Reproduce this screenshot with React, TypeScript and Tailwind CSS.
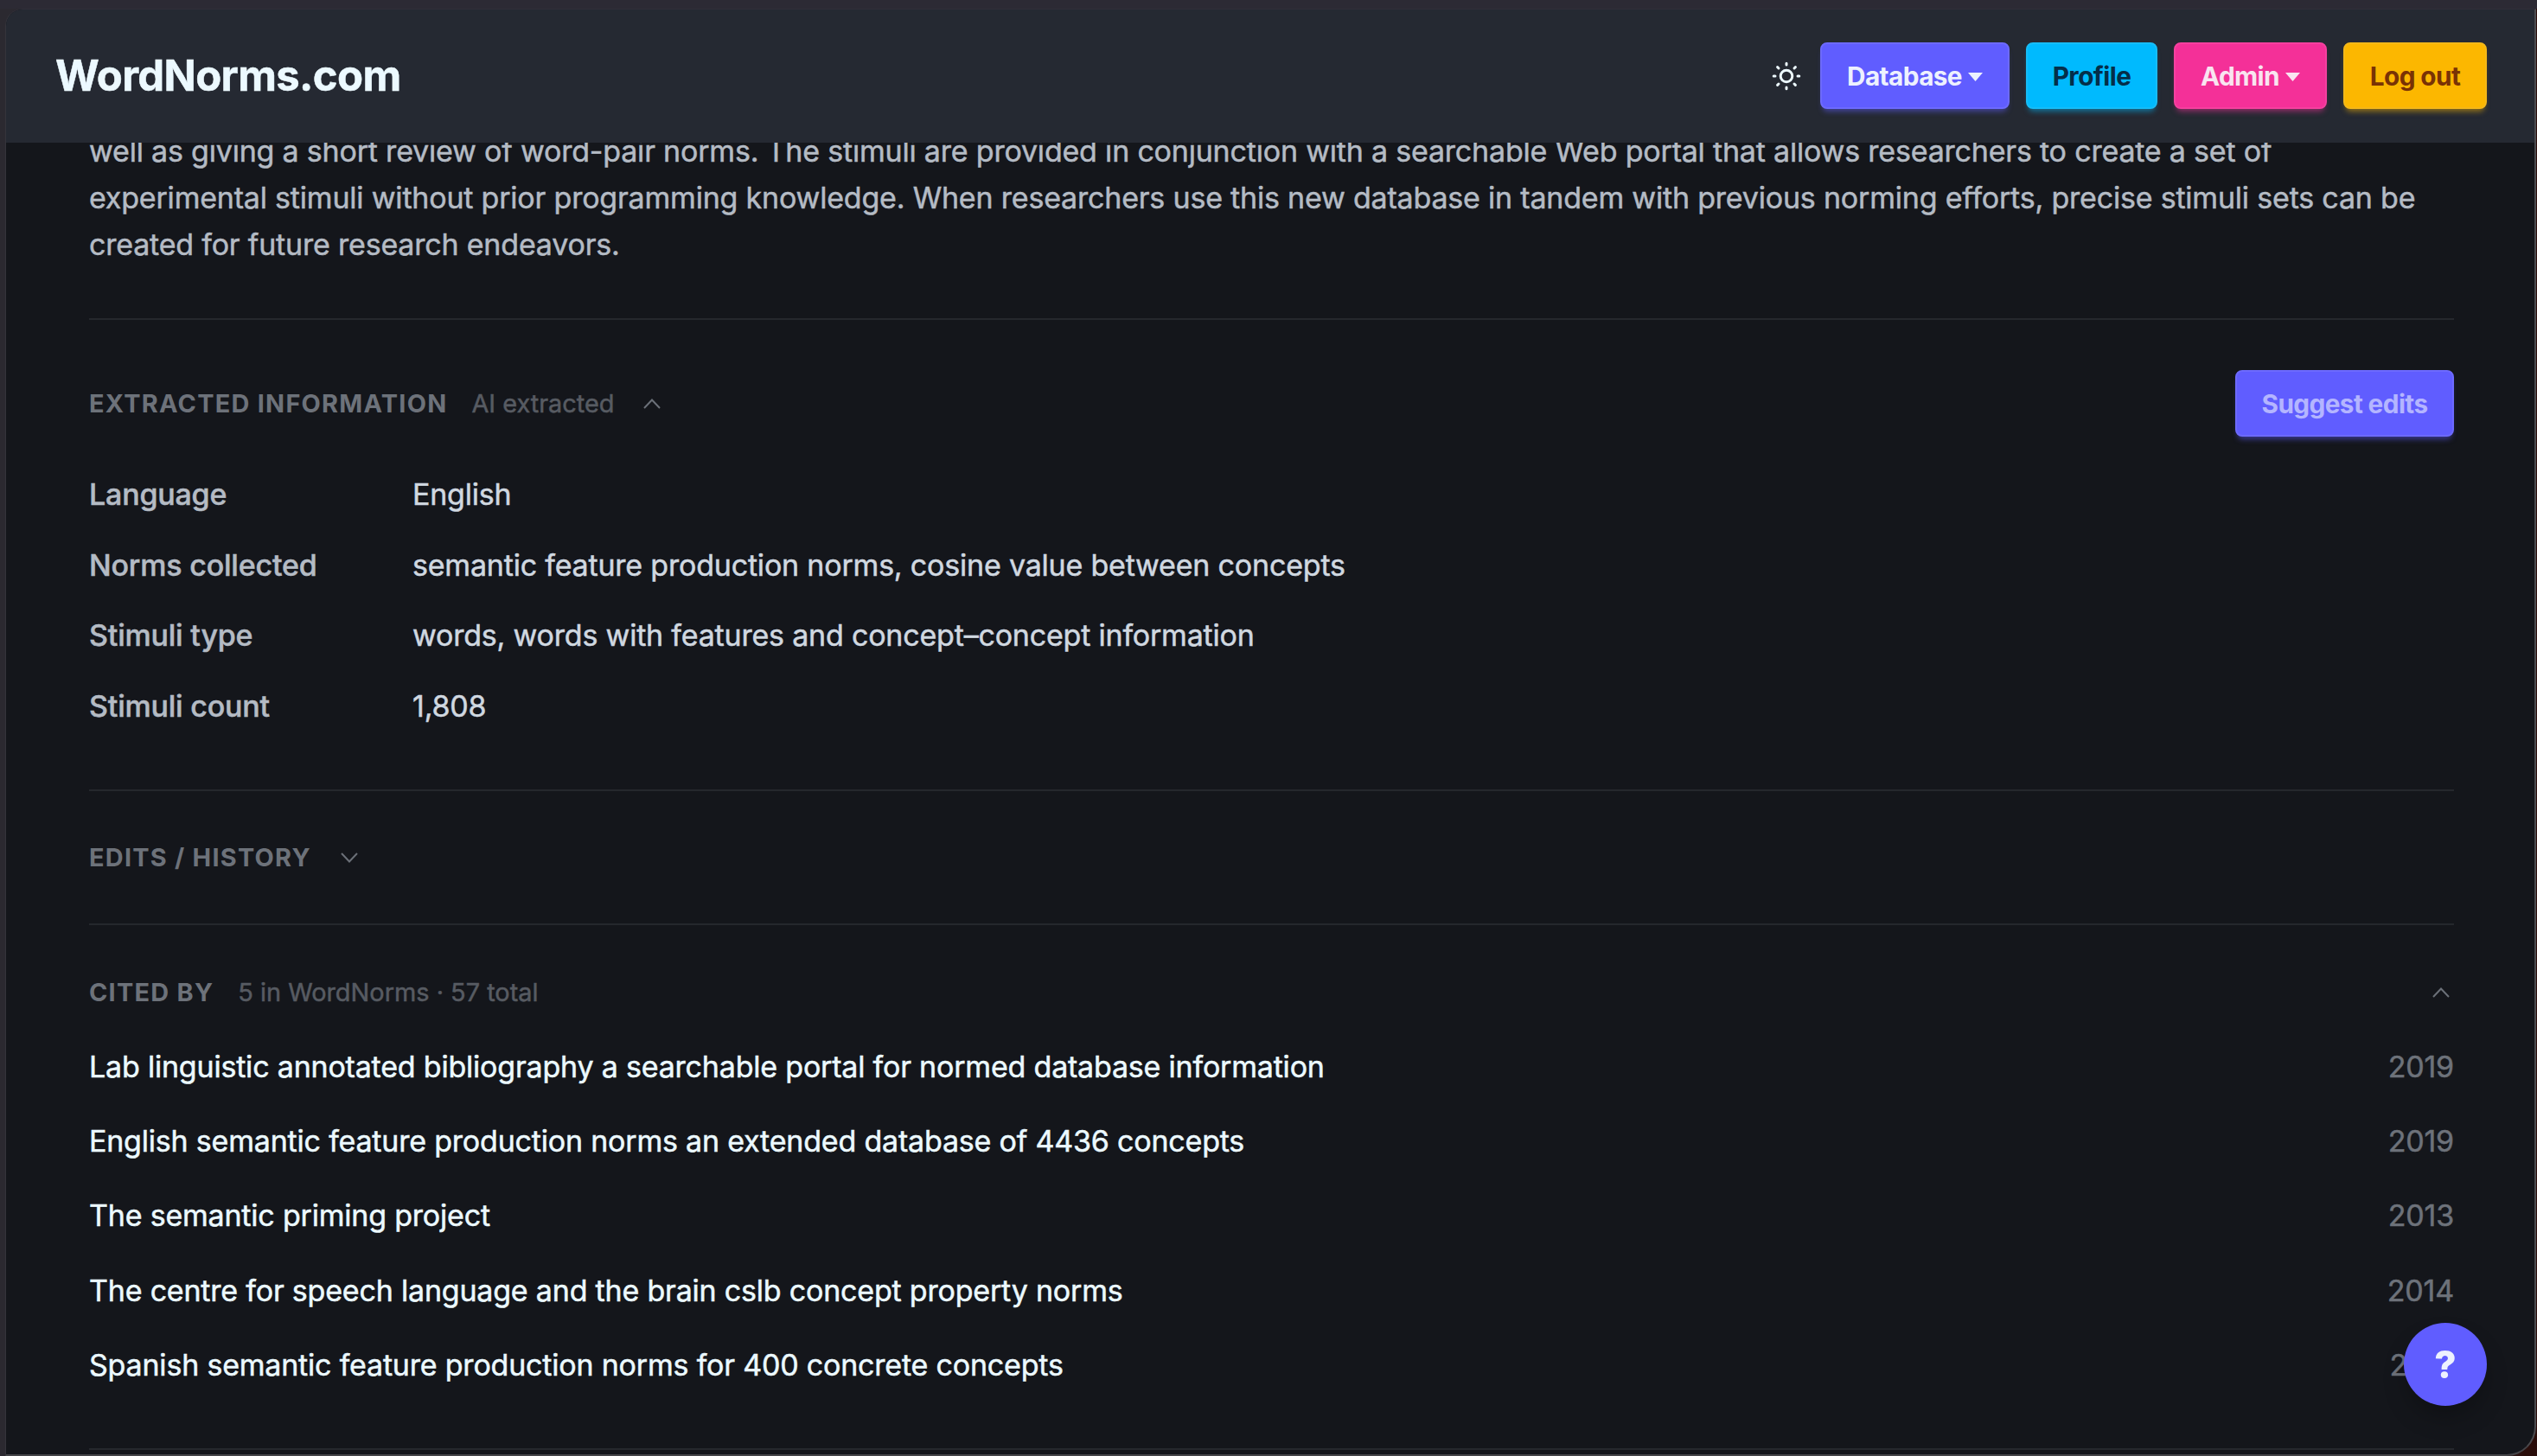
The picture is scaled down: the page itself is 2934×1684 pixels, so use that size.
import type {ReactNode} from "react";
import clsx from "clsx";

const extracted = [
	{label: "Language", value: "English"},
	{label: "Norms collected", value: "semantic feature production norms, cosine value between concepts"},
	{label: "Stimuli type", value: "words, words with features and concept–concept information"},
	{label: "Stimuli count", value: "1,808"},
];

const citations = [
	{title: "Lab linguistic annotated bibliography a searchable portal for normed database information", year: 2019},
	{title: "English semantic feature production norms an extended database of 4436 concepts", year: 2019},
	{title: "The semantic priming project", year: 2013},
	{title: "The centre for speech language and the brain cslb concept property norms", year: 2014},
	{title: "Spanish semantic feature production norms for 400 concrete concepts", year: 2017},
];

const SunIcon = () => (
	<svg viewBox="0 0 34 34" className="mt-0.5 mr-[3px] size-[34px]" fill="none" stroke="#ecf9ff" strokeWidth="3" strokeLinecap="round">
		<circle cx="17" cy="17" r="6.8"/>
		<path d="M17 2.2v1.8M17 30v1.8M2.2 17H4M30 17h1.8M6.6 6.6 8 8M26 26l1.4 1.4M6.6 27.4 8 26M26 8l1.4-1.4"/>
	</svg>
);

const Caret = () => (
	<svg viewBox="0 0 17 10" className="mt-0.5 h-2.5 w-[17px]" fill="currentColor">
		<path d="M0 0h17L8.5 10z"/>
	</svg>
);

const Chevron = ({up = false}: { up?: boolean }) => (
	<svg viewBox="0 0 20 12" className="h-3 w-5" fill="none" stroke="#6b7078" strokeWidth="2">
		<path d={up ? "M1 11 10 1.5 19 11" : "M1 1l9 9.5L19 1"}/>
	</svg>
);

const Button = ({className, children}: { className: string; children: ReactNode }) => (
	<button
		className={clsx(
			"flex h-[77px] items-center justify-center gap-[7px] rounded-lg border-2 text-[29.75px] font-bold tracking-[-0.6px] [-webkit-text-stroke:0]",
			className,
		)}>
		{children}
	</button>
);

const SectionTitle = ({children}: { children: ReactNode }) => (
	<h2 className="text-[28.9px] font-bold tracking-[1.25px] text-[#6d727a] uppercase [-webkit-text-stroke:0]">{children}</h2>
);

const App = () => {
	return (
		<div className="h-[1684px] w-[2934px] overflow-hidden bg-[linear-gradient(to_right,#2b2930_0%,#2b2930_98%,#2a0d0a_99.5%)] font-['Inter',sans-serif]">
			<div className="h-2.5 bg-[#2c2a34]"/>
			<div
				className="ml-[6px] flex h-[1674px] w-[2927px] flex-col overflow-hidden rounded-tl-[20px] rounded-br-[34px] border-t border-r-2 border-b-2 border-l border-t-[#312f39] border-r-[#4a4a4e] border-b-[#444448] border-l-[#35343b] bg-[#14161b]">
				<header className="z-10 flex h-[154px] shrink-0 items-center justify-between bg-[#252932] pr-[55px] pb-0.5 pl-[57px]">
					<span className="pt-0.5 text-[49px] font-bold tracking-[-0.65px] text-[#ecf9ff] [-webkit-text-stroke:0.5px]">WordNorms.com</span>
					<nav className="flex items-center gap-[19px]">
						<SunIcon/>
						<Button className="w-[219px] border-[#6d6aff] bg-[#605dff] pt-0.5 text-[#edf1fe] shadow-[0_6px_6px_-3px_#605dff80]">
							Database <Caret/>
						</Button>
						<Button className="w-[152px] border-[#16bdf8] bg-[#00bafe] pt-0.5 text-[#042e49] shadow-[0_6px_6px_-3px_#00bafe80]">
							Profile
						</Button>
						<Button className="w-[177px] border-[#f5409f] bg-[#f43098] pt-0.5 text-[#f9e4f0] shadow-[0_6px_6px_-3px_#f4309880]">
							Admin <Caret/>
						</Button>
						<Button className="w-[166px] border-[#f5b818] bg-[#fcb700] pt-0.5 text-[#793205] shadow-[0_6px_6px_-3px_#fcb70080]">
							Log out
						</Button>
					</nav>
				</header>

				<main className="flex flex-col pr-[93px] pl-24 text-[34px] leading-[54.4px] tracking-[-0.2px] [-webkit-text-stroke:0.5px]">
					<p className="-mt-[17.5px] pr-3 text-[#b4bbc4]">
						well as giving a short review of word-pair norms. The stimuli are provided in conjunction with a
						searchable Web portal that allows researchers to create a set of<br/>experimental stimuli without prior
						programming knowledge. When researchers use this new database in tandem with previous norming
						efforts, precise stimuli sets can be<br/>created for future research endeavors.
					</p>

					<section className="mt-[57.5px] h-[545px] border-t-2 border-[#25282d] pt-[58px]">
						<div className="flex h-[77px] items-center justify-between">
							<div className="flex items-center">
								<SectionTitle>Extracted information</SectionTitle>
								<span className="ml-7 text-[28.9px] tracking-normal text-[#575b62]">AI extracted</span>
								<span className="ml-[33px]"><Chevron up/></span>
							</div>
							<Button className="w-[253px] border-[#6d6aff] bg-[#605dff] text-[#b4b5ff] shadow-[0_6px_6px_-3px_#605dff80]">
								Suggest edits
							</Button>
						</div>
						<dl className="mt-10 flex flex-col gap-[27.2px]">
							{extracted.map((row) => (
								<div key={row.label} className="flex">
									<dt className="w-[374px] font-medium text-[#b4bbc4]">{row.label}</dt>
									<dd className="text-[#d0d8e0]">{row.value}</dd>
								</div>
							))}
						</dl>
					</section>

					<section className="flex h-[155px] items-center border-t-2 border-[#25282d]">
						<SectionTitle>Edits / history</SectionTitle>
						<span className="ml-[34px]"><Chevron/></span>
					</section>

					<section className="h-[607px] border-t-2 border-[#25282d] pt-[51px]">
						<div className="flex items-center">
							<SectionTitle>Cited by</SectionTitle>
							<span className="ml-7 text-[28.9px] tracking-normal text-[#575b62]">5 in WordNorms · 57 total</span>
							<span className="mr-[5px] ml-auto"><Chevron up/></span>
						</div>
						<ul className="mt-[31px] flex flex-col gap-[31.9px]">
							{citations.map((item) => (
								<li key={item.title} className="flex justify-between">
									<span className="text-[#ecf9ff]">{item.title}</span>
									<span className="text-[#6d727a]">{item.year}</span>
								</li>
							))}
						</ul>
					</section>
					<div className="h-0.5 shrink-0 bg-[#25282d]"/>
				</main>
			</div>

			<button
				className="fixed top-[1530px] left-[2780px] flex size-24 items-center justify-center rounded-full bg-[#605dff] text-[44px] font-extrabold text-[#edf1fe] shadow-[0_16px_30px_-6px_#0000004d]">
				?
			</button>
		</div>
	);
};

export default App;
